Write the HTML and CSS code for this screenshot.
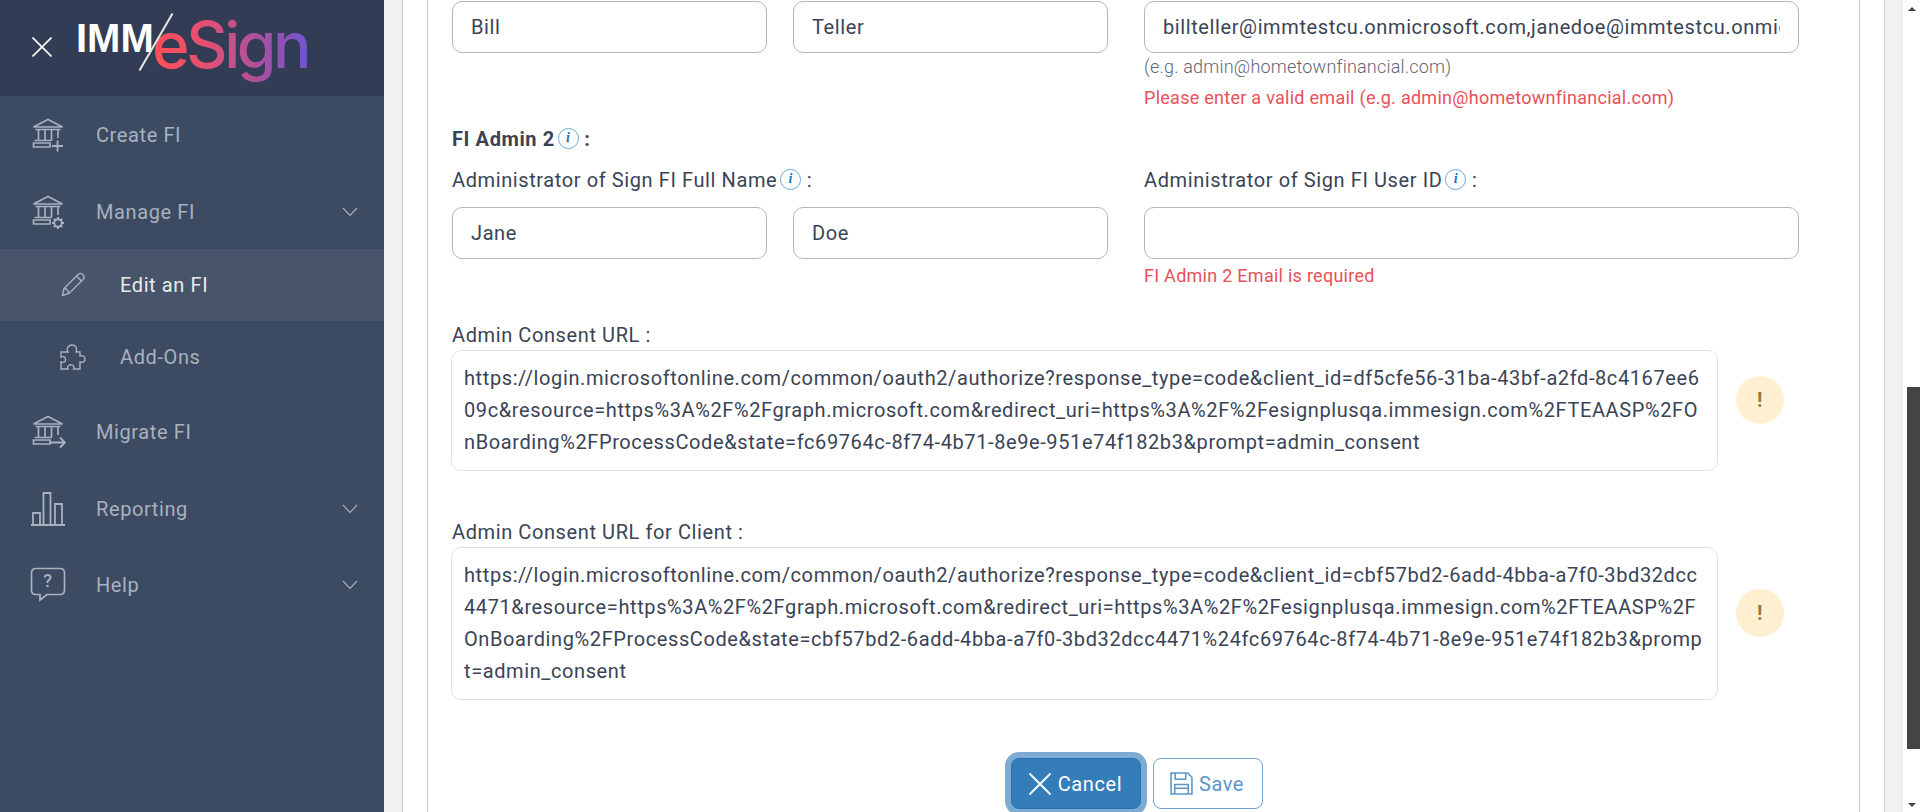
FILE: index.html
```html
<!DOCTYPE html>
<html lang="en">
<head>
    <meta charset="UTF-8">
    <meta name="viewport" content="width=device-width, initial-scale=1.0">
    <title>IMM eSign - Edit an FI</title>
    <link rel="stylesheet" href="styles.css">
</head>
<body>
    <svg class="icon-defs" xmlns="http://www.w3.org/2000/svg">
        <symbol id="bank" viewBox="0 0 36 36">
            <path d="M3.5 10 L18 2.5 L32.5 10 Z M5.5 12.5 H30.5 M8.5 12.5 V23 M15 12.5 V23 M21.5 12.5 V23 M28 12.5 V21 M4.5 23.5 H22" fill="none" stroke="currentColor" stroke-width="1.7" />
            <path d="M3.5 26 H20 V30 H3.5 Z" fill="none" stroke="currentColor" stroke-width="1.7" />
        </symbol>
    </svg>

    <aside class="sidebar">
        <div class="brand">
            <svg class="close-icon" viewBox="0 0 20 20" width="20" height="20"><path d="M0.5 0.5 L19.5 19.5 M19.5 0.5 L0.5 19.5" stroke="#fff" stroke-width="1.6" /></svg>
            <div class="logo">
                <span class="logo-imm">IMM</span>
                <span class="logo-slash"></span>
                <span class="logo-esign">eSign</span>
            </div>
        </div>
        <nav class="nav">
            <a class="nav-item">
                <span class="nav-icon">
                    <svg viewBox="0 0 36 36" width="36" height="36">
                        <use href="#bank" />
                        <path d="M22 29 H33 M27.5 23.5 V34.5" fill="none" stroke="currentColor" stroke-width="1.8" />
                    </svg>
                </span>
                Create FI
            </a>
            <a class="nav-item">
                <span class="nav-icon">
                    <svg viewBox="0 0 36 36" width="36" height="36">
                        <use href="#bank" />
                        <circle cx="28" cy="29" r="3.8" fill="none" stroke="currentColor" stroke-width="2" />
                        <path d="M28 23 V25 M28 33 V35 M22 29 H24 M32 29 H34 M23.8 24.8 L25.2 26.2 M30.8 31.8 L32.2 33.2 M32.2 24.8 L30.8 26.2 M25.2 31.8 L23.8 33.2" stroke="currentColor" stroke-width="1.8" />
                    </svg>
                </span>
                Manage FI
                <svg class="chevron" viewBox="0 0 16 10" width="16" height="10"><path d="M1 1 L8 8.5 L15 1" fill="none" stroke="currentColor" stroke-width="1.1" /></svg>
            </a>
            <a class="nav-item nav-sub active">
                <span class="nav-icon">
                    <svg viewBox="0 0 26 26" width="26" height="26">
                        <path d="M2.5 23.5 L4 16.5 L18.5 2 Q20.5 0.5 22.8 2.5 Q25 5 23.5 7 L9 21.5 Z M4 16.5 Q7.5 16.5 9 21.5 M16.5 4 L21.5 9" fill="none" stroke="currentColor" stroke-width="1.4" />
                    </svg>
                </span>
                Edit an FI
            </a>
            <a class="nav-item nav-sub">
                <span class="nav-icon">
                    <svg viewBox="0 0 26 26" width="26" height="26">
                        <path d="M1 8 H8 Q6.5 5 8 3 Q9.5 1 12 1 Q14.5 1 16 3 Q17 5 16 8 H20 V12 Q23 11 24.5 13 Q25.5 15.5 24.5 17 Q23 19 20 18 V25 H13.5 Q14.5 22.5 13 21.5 Q10.5 20 8.5 21.5 Q7 22.5 8 25 H1 V18 Q3.5 19 5 17.5 Q6 15.5 5 13.5 Q3.5 12 1 13 Z" fill="none" stroke="currentColor" stroke-width="1.4" />
                    </svg>
                </span>
                Add-Ons
            </a>
            <a class="nav-item">
                <span class="nav-icon">
                    <svg viewBox="0 0 36 36" width="36" height="36">
                        <use href="#bank" />
                        <path d="M20 28.5 H35 M30 23.5 L35 28.5 L30 33.5" fill="none" stroke="currentColor" stroke-width="1.8" />
                    </svg>
                </span>
                Migrate FI
            </a>
            <a class="nav-item">
                <span class="nav-icon">
                    <svg viewBox="0 0 36 36" width="36" height="36">
                        <path d="M1 34 H35 M3 34 V22 H10 V34 M13.5 34 V2 H20.5 V34 M25 34 V13 H32 V34" fill="none" stroke="currentColor" stroke-width="1.8" />
                    </svg>
                </span>
                Reporting
                <svg class="chevron" viewBox="0 0 16 10" width="16" height="10"><path d="M1 1 L8 8.5 L15 1" fill="none" stroke="currentColor" stroke-width="1.1" /></svg>
            </a>
            <a class="nav-item">
                <span class="nav-icon">
                    <svg viewBox="0 0 36 36" width="36" height="36">
                        <path d="M6 1.5 H30 Q34.5 1.5 34.5 6 V23 Q34.5 27.5 30 27.5 H17 L10 33 V27.5 H6 Q1.5 27.5 1.5 23 V6 Q1.5 1.5 6 1.5 Z" fill="none" stroke="currentColor" stroke-width="1.7" />
                    </svg>
                    <span class="help-mark">?</span>
                </span>
                Help
                <svg class="chevron" viewBox="0 0 16 10" width="16" height="10"><path d="M1 1 L8 8.5 L15 1" fill="none" stroke="currentColor" stroke-width="1.1" /></svg>
            </a>
        </nav>
    </aside>

    <main class="content">
        <div class="panel">
            <div class="card">
                <div class="field-row first-row">
                    <div class="name-pair">
                        <input class="text-input" type="text" value="Bill">
                        <input class="text-input" type="text" value="Teller">
                    </div>
                    <div class="email-col">
                        <input class="text-input" type="text" value="billteller@immtestcu.onmicrosoft.com,janedoe@immtestcu.onmicrosoft.com">
                        <div class="hint">(e.g. admin@hometownfinancial.com)</div>
                        <div class="error">Please enter a valid email (e.g. admin@hometownfinancial.com)</div>
                    </div>
                </div>

                <div class="section-title">FI Admin 2<span class="info">i</span> :</div>

                <div class="field-row">
                    <div class="name-col">
                        <div class="field-label">Administrator of Sign FI Full Name<span class="info">i</span> :</div>
                        <div class="name-pair">
                            <input class="text-input" type="text" value="Jane">
                            <input class="text-input" type="text" value="Doe">
                        </div>
                    </div>
                    <div class="email-col">
                        <div class="field-label">Administrator of Sign FI User ID<span class="info">i</span> :</div>
                        <input class="text-input" type="text" value="">
                        <div class="error error-single">FI Admin 2 Email is required</div>
                    </div>
                </div>

                <div class="consent">
                    <div class="field-label">Admin Consent URL :</div>
                    <div class="consent-row">
                        <div class="consent-url">https://login.microsoftonline.com/common/oauth2/authorize?response_type=code&amp;client_id=df5cfe56-31ba-43bf-a2fd-8c4167ee609c&amp;resource=https%3A%2F%2Fgraph.microsoft.com&amp;redirect_uri=https%3A%2F%2Fesignplusqa.immesign.com%2FTEAASP%2FOnBoarding%2FProcessCode&amp;state=fc69764c-8f74-4b71-8e9e-951e74f182b3&amp;prompt=admin_consent</div>
                        <span class="warn">!</span>
                    </div>
                </div>

                <div class="consent">
                    <div class="field-label">Admin Consent URL for Client :</div>
                    <div class="consent-row">
                        <div class="consent-url">https://login.microsoftonline.com/common/oauth2/authorize?response_type=code&amp;client_id=cbf57bd2-6add-4bba-a7f0-3bd32dcc4471&amp;resource=https%3A%2F%2Fgraph.microsoft.com&amp;redirect_uri=https%3A%2F%2Fesignplusqa.immesign.com%2FTEAASP%2FOnBoarding%2FProcessCode&amp;state=cbf57bd2-6add-4bba-a7f0-3bd32dcc4471%24fc69764c-8f74-4b71-8e9e-951e74f182b3&amp;prompt=admin_consent</div>
                        <span class="warn">!</span>
                    </div>
                </div>

                <div class="actions">
                    <button class="btn btn-cancel" type="button">
                        <svg viewBox="0 0 24 24" width="24" height="24"><path d="M1.5 1.5 L22.5 22.5 M22.5 1.5 L1.5 22.5" stroke="#fff" stroke-width="1.8" /></svg>
                        Cancel
                    </button>
                    <button class="btn btn-save" type="button">
                        <svg viewBox="0 0 22 22" width="23" height="23"><path d="M1 1 H17 L21 5 V21 H1 Z M5 1 V7 H15 V1 M4.5 21 V12 H17.5 V21 M4.5 15.5 H17.5" fill="none" stroke="currentColor" stroke-width="1.5" /></svg>
                        Save
                    </button>
                </div>
            </div>
        </div>
    </main>

    <div class="scrollbar">
        <span class="arrow-up"></span>
        <div class="scroll-track"><div class="scroll-thumb"></div></div>
        <span class="arrow-down"></span>
    </div>
</body>
</html>
```

FILE: styles.css
```css
* {
    box-sizing: border-box;
}

body {
    font-family: 'Roboto', sans-serif;
    font-size: 20px;
    letter-spacing: 0.6px;
    color: #3a4356;
    background-color: #f1f1f1;
    display: flex;
    height: 100vh;
    margin: 0;
    overflow: hidden;
}

.icon-defs {
    display: none;
}

/* sidebar */
.sidebar {
    width: 384px;
    flex-shrink: 0;
    background-color: #3c4a62;
    color: #a9b1bf;
}

.brand {
    height: 96px;
    background-color: #323d55;
    display: flex;
    align-items: center;
    padding-left: 32px;
}

.close-icon {
    margin-right: 24px;
    margin-top: -2px;
}

.logo {
    position: relative;
    display: flex;
    align-items: flex-start;
    height: 68px;
    letter-spacing: 0;
}

.logo-imm {
    color: #fff;
    font-family: 'Liberation Sans', sans-serif;
    font-size: 40px;
    line-height: 1;
    font-weight: 700;
    letter-spacing: 0;
    width: 76px;
    margin-top: 4px;
}

.logo-slash {
    position: absolute;
    left: 79px;
    top: -5px;
    width: 2px;
    height: 66px;
    background-color: #e8e8ea;
    transform: rotate(30deg);
}

.logo-esign {
    font-family: 'Inter', sans-serif;
    font-size: 64px;
    line-height: 1;
    font-weight: 500;
    letter-spacing: -3.4px;
    margin-top: -1px;
    padding-bottom: 16px;
    background: linear-gradient(90deg, #ff4f55 0%, #e34f72 35%, #b0509a 65%, #6f54d0 100%);
    -webkit-background-clip: text;
    background-clip: text;
    color: transparent;
}

.nav-item {
    display: flex;
    align-items: center;
    height: 76.5px;
    padding-left: 30px;
    padding-top: 2px;
}

.nav-icon {
    position: relative;
    width: 66px;
    flex-shrink: 0;
    display: flex;
}

.nav-icon svg {
    display: block;
}

.help-mark {
    position: absolute;
    left: 11px;
    top: 3px;
    width: 14px;
    text-align: center;
    font-size: 18px;
    font-weight: 500;
}

.chevron {
    margin-left: auto;
    margin-right: 26px;
}

.nav-sub {
    height: 72px;
    padding-left: 60px;
    padding-top: 0;
}

.nav-sub .nav-icon {
    width: 60px;
}

.active {
    background-color: #475469;
    color: #e9ebef;
}

.active .nav-icon {
    color: #a9b1bf;
}

/* main area */
.content {
    flex: 1;
    padding: 0 18px;
    min-width: 0;
}

.panel {
    height: 100%;
    background-color: #fff;
    border-left: 1px solid #ccc;
    border-right: 1px solid #ccc;
    padding: 0 24px;
}

.card {
    height: 100%;
    border-left: 1px solid #ccc;
    border-right: 1px solid #ccc;
    padding: 1px 24px 0;
}

.field-row {
    display: flex;
    gap: 36px;
}

.name-pair {
    display: flex;
    gap: 26px;
}

.name-col {
    width: 656px;
    flex-shrink: 0;
}

.first-row .name-pair {
    width: 656px;
    flex-shrink: 0;
}

.email-col {
    width: 655px;
    flex-shrink: 0;
}

.text-input {
    display: block;
    width: 315px;
    height: 52px;
    padding: 0 18px;
    border: 1px solid #b3b6c2;
    border-radius: 10px;
    font-family: 'Roboto', sans-serif;
    font-size: 20px;
    letter-spacing: 0.6px;
    color: #3a4356;
    background-color: #fff;
}

.email-col .text-input {
    width: 100%;
}

.hint {
    font-size: 18px;
    font-weight: 300;
    letter-spacing: 0.2px;
    color: #5d6675;
    margin-top: 4px;
    line-height: 20px;
}

.error {
    font-size: 18px;
    letter-spacing: 0.27px;
    color: #e9505a;
    margin-top: 11px;
    line-height: 20px;
}

.error-single {
    margin-top: 7px;
}

.section-title {
    font-weight: 700;
    margin-top: 19px;
    margin-bottom: 17px;
    line-height: 24px;
}

.field-label {
    line-height: 24px;
    margin-bottom: 15px;
}

.info {
    display: inline-block;
    width: 21px;
    height: 21px;
    margin: 0 0 0 3px;
    border: 1px solid #6aa9d6;
    border-radius: 50%;
    color: #1b75bb;
    font-family: 'Liberation Serif', serif;
    font-style: italic;
    font-weight: 700;
    font-size: 14px;
    line-height: 18px;
    text-align: center;
    vertical-align: 4px;
}

.consent {
    margin-top: 37px;
    margin-left: -1px;
}

.consent .field-label {
    margin-left: 1px;
    margin-bottom: 3px;
}

.consent + .consent {
    margin-top: 49px;
}

.consent-row {
    display: flex;
    align-items: center;
}

.consent-url {
    width: 1267px;
    flex-shrink: 0;
    padding: 11px 12px 12px;
    border: 1px solid #dfe1e8;
    border-radius: 10px;
    line-height: 32px;
    word-break: break-all;
}

.warn {
    width: 48px;
    height: 48px;
    margin-left: 18px;
    margin-bottom: 22px;
    border-radius: 50%;
    background-color: #fdefcf;
    color: #97753c;
    font-weight: 700;
    font-size: 20px;
    line-height: 48px;
    text-align: center;
}

.actions {
    display: flex;
    justify-content: center;
    gap: 12px;
    margin-top: 58px;
    padding-right: 13px;
}

.btn {
    display: flex;
    align-items: center;
    justify-content: center;
    gap: 6px;
    height: 51px;
    border-radius: 8px;
    font-family: 'Roboto', sans-serif;
    font-size: 20px;
    letter-spacing: 0.6px;
}

.btn-cancel {
    width: 130px;
    padding-right: 8px;
    border: 1px solid #2a6fae;
    background-color: #347db9;
    color: #fff;
    box-shadow: 0 0 0 6px #7eabd3;
}

.btn-save {
    width: 110px;
    padding-right: 8px;
    border: 1px solid #6ea3cf;
    background-color: #fff;
    color: #5a97c9;
}

/* scrollbar */
.scrollbar {
    width: 17px;
    flex-shrink: 0;
    background-color: #fff;
    display: flex;
    flex-direction: column;
    align-items: center;
}

.arrow-up,
.arrow-down {
    width: 0;
    height: 0;
    border-left: 4px solid transparent;
    border-right: 4px solid transparent;
    flex-shrink: 0;
}

.arrow-up {
    margin-top: 7px;
    border-bottom: 4px solid #444;
}

.arrow-down {
    margin-bottom: 5px;
    border-top: 4px solid #444;
}

.scroll-track {
    flex: 1;
    width: 100%;
    padding-left: 4px;
    padding-top: 376px;
    padding-bottom: 54px;
}

.scroll-thumb {
    height: 100%;
    background-color: #444;
}
```
